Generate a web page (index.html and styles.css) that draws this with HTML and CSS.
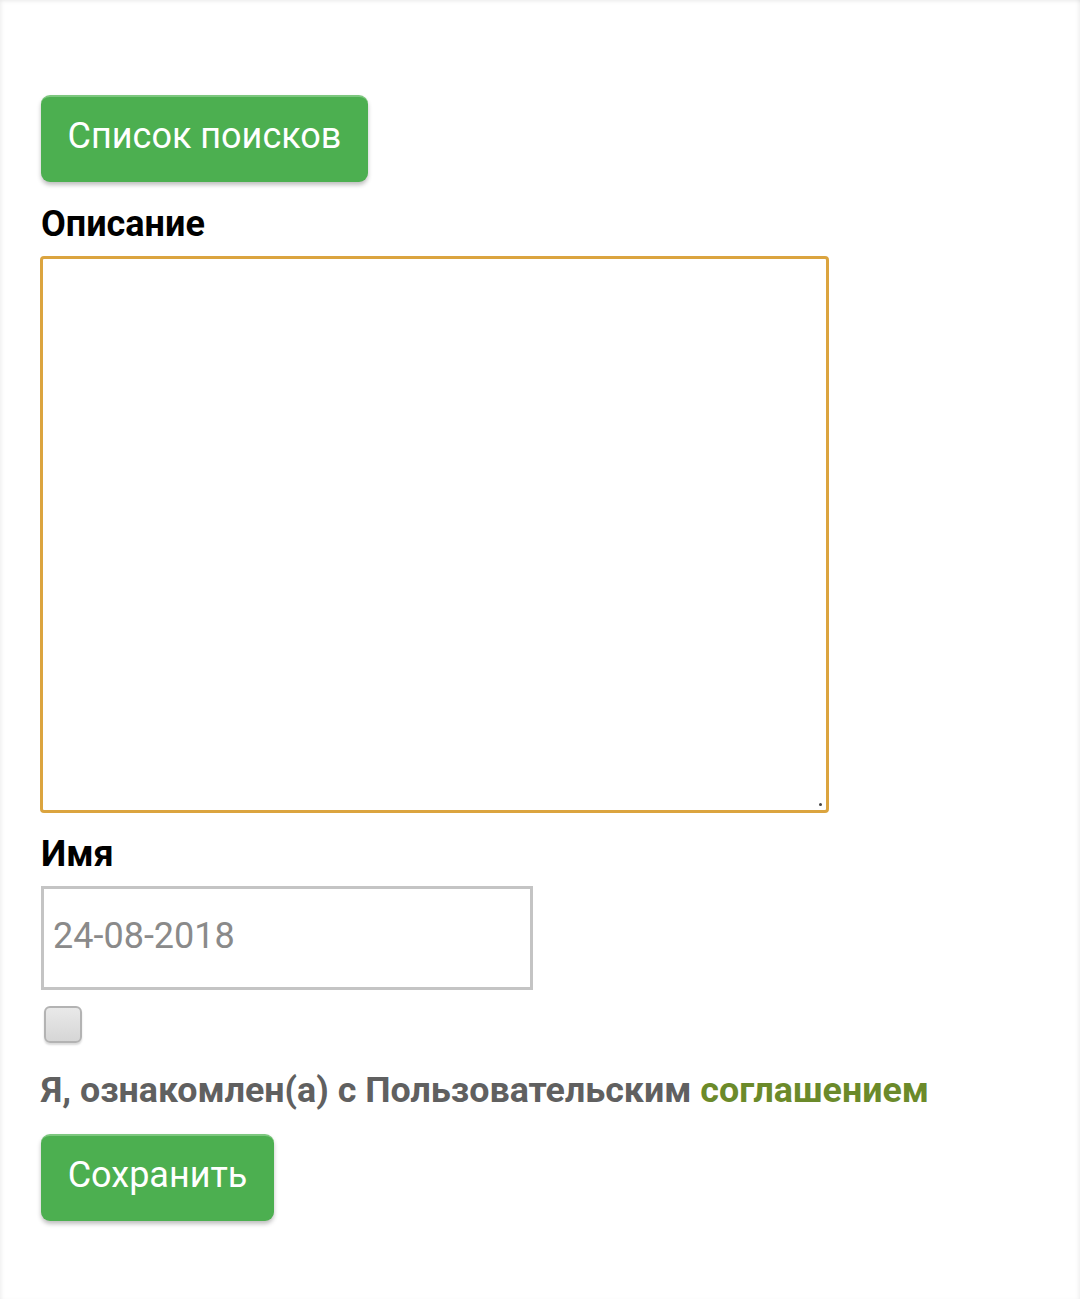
FILE: index.html
```html
<!DOCTYPE html>
<html lang="ru">
<head>
<meta charset="utf-8">
<title>Форма</title>
<link rel="stylesheet" href="styles.css">
</head>
<body>
<div class="page">
  <form class="form">
    <button type="button" class="btn btn-list">Список поисков</button>
    <label class="field-label label-desc" for="desc">Описание</label>
    <div class="textarea-wrap">
      <textarea id="desc" class="textarea"></textarea>
    </div>
    <label class="field-label label-name" for="name">Имя</label>
    <input id="name" class="input" type="text" placeholder="24-08-2018">
    <input type="checkbox" class="checkbox">
    <p class="agree">Я, ознакомлен(а) с Пользовательским <a class="agree-link" href="#">соглашением</a></p>
    <button type="button" class="btn btn-save">Сохранить</button>
  </form>
</div>
</body>
</html>
```

FILE: styles.css
```css
html, body {
  margin: 0;
  padding: 0;
  background: #fff;
}
.page {
  width: 1080px;
  height: 1299px;
  box-sizing: border-box;
  box-shadow: inset 3px 3px 4px -2px rgba(0,0,0,0.08), inset -3px 0 4px -2px rgba(0,0,0,0.08);
  font-family: Roboto, "Noto Sans", sans-serif;
  padding: 95px 0 0 41px;
}
.form {
  display: flex;
  flex-direction: column;
  align-items: flex-start;
}
.btn {
  background: #4CAF50;
  color: #fff;
  border: none;
  border-top: 2px solid #7dc77f;
  border-radius: 9px;
  box-shadow: 0 3px 4px rgba(0,0,0,0.25);
  font-family: Roboto, sans-serif;
  font-size: 36px;
  font-weight: 400;
  height: 87px;
  padding: 0 0 8px;
  cursor: pointer;
}
.btn-list {
  width: 327px;
}
.btn-save {
  width: 233px;
  margin-top: 25px;
}
.field-label {
  font-weight: 700;
  font-size: 36px;
  color: #000;
  line-height: 36px;
}
.label-desc {
  margin-top: 24px;
}
.textarea-wrap {
  position: relative;
  margin-top: 14px;
  margin-left: -1px;
  display: flex;
}
.textarea-wrap::after {
  content: "";
  position: absolute;
  right: 7px;
  bottom: 7px;
  width: 3px;
  height: 3px;
  border-radius: 50%;
  background: #444;
}
.textarea {
  width: 789px;
  height: 557px;
  box-sizing: border-box;
  border: 3px solid #dba43f;
  border-radius: 4px;
  resize: none;
  outline: none;
  margin: 0;
}
.label-name {
  margin-top: 23px;
}
.input {
  margin-top: 14px;
  width: 492px;
  height: 104px;
  box-sizing: border-box;
  border: 3px solid #c4c4c4;
  border-radius: 0;
  padding: 0 9px 4px;
  font-family: Roboto, sans-serif;
  font-size: 36px;
  color: #333;
  outline: none;
}
.input::placeholder {
  color: #8a8a8a;
}
.checkbox {
  appearance: none;
  -webkit-appearance: none;
  margin: 16px 0 0 3px;
  width: 38px;
  height: 37px;
  box-sizing: border-box;
  border: 2px solid #b3b3b3;
  border-radius: 6px;
  background: linear-gradient(#e9e9e9, #d6d6d6);
  box-shadow: 0 2px 2px rgba(0,0,0,0.15);
}
.agree {
  margin: 28px 0 0;
  font-size: 35.8px;
  font-weight: 700;
  color: #606060;
  line-height: 38px;
}
.agree-link {
  color: #6b8a2a;
  text-decoration: none;
}
```
